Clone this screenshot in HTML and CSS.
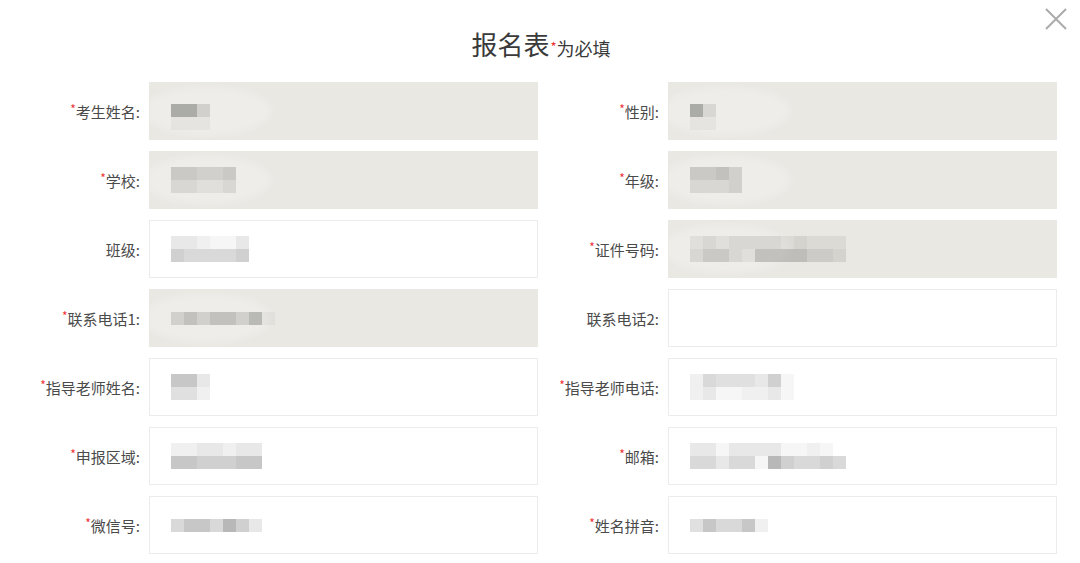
FILE: index.html
```html
<!DOCTYPE html>
<html lang="zh-CN">
<head>
<meta charset="utf-8">
<title>报名表</title>
<link rel="stylesheet" href="styles.css">
</head>
<body>
<div class="modal">
  <button class="close" aria-label="关闭">
    <svg width="22" height="22" viewBox="0 0 22 22"><path d="M1 1 L21 21 M21 1 L1 21" stroke="#ababab" stroke-width="2" fill="none"/></svg>
  </button>
  <h1 class="title">报名表<span class="title-req">*</span><span class="title-note">为必填</span></h1>
  <div class="form">
    <label class="lbl"><span class="req">*</span>考生姓名:</label>
    <div class="field gray"><div class="mosaic shift">
      <div class="mrow"><i class="k8"></i><i class="k8"></i><i class="k4"></i></div>
      <div class="mrow"><i class="k1"></i><i class="k1"></i><i class="k1"></i></div>
    </div></div>
    <label class="lbl"><span class="req">*</span>性别:</label>
    <div class="field gray"><div class="mosaic shift">
      <div class="mrow"><i class="k8"></i><i class="k3"></i></div>
      <div class="mrow"><i class="k1"></i><i class="k1"></i></div>
    </div></div>

    <label class="lbl"><span class="req">*</span>学校:</label>
    <div class="field gray"><div class="mosaic">
      <div class="mrow"><i class="k5"></i><i class="k5"></i><i class="k4"></i><i class="k4"></i><i class="k5"></i></div>
      <div class="mrow"><i class="k3"></i><i class="k3"></i><i class="k2"></i><i class="k2"></i><i class="k3"></i></div>
    </div></div>
    <label class="lbl"><span class="req">*</span>年级:</label>
    <div class="field gray"><div class="mosaic">
      <div class="mrow"><i class="k5"></i><i class="k5"></i><i class="k6"></i><i class="k4"></i></div>
      <div class="mrow"><i class="k3"></i><i class="k3"></i><i class="k3"></i><i class="k4"></i></div>
    </div></div>

    <label class="lbl">班级:</label>
    <div class="field"><div class="mosaic">
      <div class="mrow"><i class="k3"></i><i class="k3"></i><i class="k2"></i><i class="k1"></i><i class="k1"></i><i class="k3"></i></div>
      <div class="mrow"><i class="k6"></i><i class="k5"></i><i class="k5"></i><i class="k5"></i><i class="k5"></i><i class="k6"></i></div>
    </div></div>
    <label class="lbl"><span class="req">*</span>证件号码:</label>
    <div class="field gray"><div class="mosaic">
      <div class="mrow"><i class="k2"></i><i class="k3"></i><i class="k2"></i><i class="k3"></i><i class="k3"></i><i class="k3"></i><i class="k3"></i><i class="k2"></i><i class="k3"></i><i class="k2"></i><i class="k2"></i><i class="k2"></i></div>
      <div class="mrow"><i class="k3"></i><i class="k5"></i><i class="k5"></i><i class="k3"></i><i class="k2"></i><i class="k6"></i><i class="k6"></i><i class="k6"></i><i class="k6"></i><i class="k4"></i><i class="k4"></i><i class="k3"></i></div>
    </div></div>

    <label class="lbl"><span class="req">*</span>联系电话1:</label>
    <div class="field gray"><div class="mosaic">
      <div class="mrow"><i class="k4"></i><i class="k6"></i><i class="k4"></i><i class="k6"></i><i class="k6"></i><i class="k4"></i><i class="k7"></i><i class="k1"></i></div>
    </div></div>
    <label class="lbl">联系电话2:</label>
    <div class="field"></div>

    <label class="lbl"><span class="req">*</span>指导老师姓名:</label>
    <div class="field"><div class="mosaic">
      <div class="mrow"><i class="k7"></i><i class="k7"></i><i class="k3"></i></div>
      <div class="mrow"><i class="k4"></i><i class="k4"></i><i class="k2"></i></div>
    </div></div>
    <label class="lbl"><span class="req">*</span>指导老师电话:</label>
    <div class="field"><div class="mosaic">
      <div class="mrow"><i class="k2"></i><i class="k5"></i><i class="k4"></i><i class="k4"></i><i class="k4"></i><i class="k3"></i><i class="k6"></i><i class="k1"></i></div>
      <div class="mrow"><i class="k2"></i><i class="k3"></i><i class="k1"></i><i class="k1"></i><i class="k2"></i><i class="k2"></i><i class="k3"></i><i class="k1"></i></div>
    </div></div>

    <label class="lbl"><span class="req">*</span>申报区域:</label>
    <div class="field"><div class="mosaic">
      <div class="mrow"><i class="k2"></i><i class="k2"></i><i class="k3"></i><i class="k3"></i><i class="k2"></i><i class="k3"></i><i class="k3"></i></div>
      <div class="mrow"><i class="k7"></i><i class="k7"></i><i class="k6"></i><i class="k6"></i><i class="k6"></i><i class="k7"></i><i class="k7"></i></div>
    </div></div>
    <label class="lbl"><span class="req">*</span>邮箱:</label>
    <div class="field"><div class="mosaic">
      <div class="mrow"><i class="k3"></i><i class="k3"></i><i class="k1"></i><i class="k3"></i><i class="k3"></i><i class="k3"></i><i class="k3"></i><i class="k1"></i><i class="k1"></i><i class="k2"></i><i class="k1"></i><i class="k0"></i></div>
      <div class="mrow"><i class="k5"></i><i class="k5"></i><i class="k3"></i><i class="k5"></i><i class="k5"></i><i class="k1"></i><i class="k8"></i><i class="k6"></i><i class="k5"></i><i class="k5"></i><i class="k6"></i><i class="k5"></i></div>
    </div></div>

    <label class="lbl"><span class="req">*</span>微信号:</label>
    <div class="field"><div class="mosaic">
      <div class="mrow"><i class="k5"></i><i class="k7"></i><i class="k7"></i><i class="k5"></i><i class="k8"></i><i class="k6"></i><i class="k3"></i></div>
    </div></div>
    <label class="lbl"><span class="req">*</span>姓名拼音:</label>
    <div class="field"><div class="mosaic">
      <div class="mrow"><i class="k4"></i><i class="k7"></i><i class="k5"></i><i class="k5"></i><i class="k7"></i><i class="k2"></i></div>
    </div></div>
  </div>
</div>
</body>
</html>
```

FILE: styles.css
```css
* { box-sizing: border-box; }

html, body {
  margin: 0;
  padding: 0;
  background: #ffffff;
}

body {
  font-family: "Noto Sans CJK SC", "Noto Sans", sans-serif;
  color: #444444;
  width: 1080px;
  height: 563px;
  overflow: hidden;
}

.modal {
  position: relative;
  width: 1080px;
  height: 563px;
}

.close {
  position: absolute;
  top: 8px;
  right: 13px;
  width: 22px;
  height: 22px;
  padding: 0;
  border: 0;
  background: transparent;
  display: flex;
  cursor: pointer;
}

.title {
  margin: 0;
  height: 82px;
  padding-top: 6px;
  padding-left: 2px;
  display: flex;
  justify-content: center;
  align-items: center;
  font-size: 26px;
  font-weight: 400;
  color: #3a3a3a;
  line-height: 1;
}

.title-req {
  color: #e8322f;
  font-size: 13px;
  align-self: center;
  margin-top: 4px;
  margin-left: 1px;
}

.title-note {
  font-size: 18px;
  color: #3a3a3a;
  margin-top: 8px;
}

.form {
  display: grid;
  grid-template-columns: 149px 389px 130px 389px;
  grid-auto-rows: 58px;
  row-gap: 11px;
}

.lbl {
  display: flex;
  align-items: center;
  justify-content: flex-end;
  padding-right: 9px;
  font-size: 15px;
  color: #4a4a4a;
  white-space: nowrap;
}

.req {
  color: #ee3333;
  font-size: 12px;
  align-self: center;
  margin-top: -6px;
}

.field {
  position: relative;
  border: 1px solid #ececec;
  background: #ffffff;
  display: flex;
  align-items: center;
  padding-left: 21px;
  overflow: hidden;
}

.field.gray {
  background: #e9e8e3;
  border-color: #e9e8e3;
}

.field.gray::before {
  content: "";
  position: absolute;
  left: -8px;
  top: 3px;
  width: 130px;
  height: 50px;
  border-radius: 50%;
  background: rgba(255, 255, 255, 0.22);
  filter: blur(3px);
}

.mosaic {
  position: relative;
  display: flex;
  flex-direction: column;
}

.mosaic.shift {
  margin-top: 12px;
}

.mrow {
  display: flex;
}

.mrow i {
  display: block;
  width: 13px;
  height: 13px;
}

.k0 { background: rgba(0, 0, 0, 0); }
.k1 { background: rgba(0, 0, 0, 0.035); }
.k2 { background: rgba(0, 0, 0, 0.06); }
.k3 { background: rgba(0, 0, 0, 0.09); }
.k4 { background: rgba(0, 0, 0, 0.12); }
.k5 { background: rgba(0, 0, 0, 0.15); }
.k6 { background: rgba(0, 0, 0, 0.185); }
.k7 { background: rgba(0, 0, 0, 0.22); }
.k8 { background: rgba(0, 0, 0, 0.28); }
```
